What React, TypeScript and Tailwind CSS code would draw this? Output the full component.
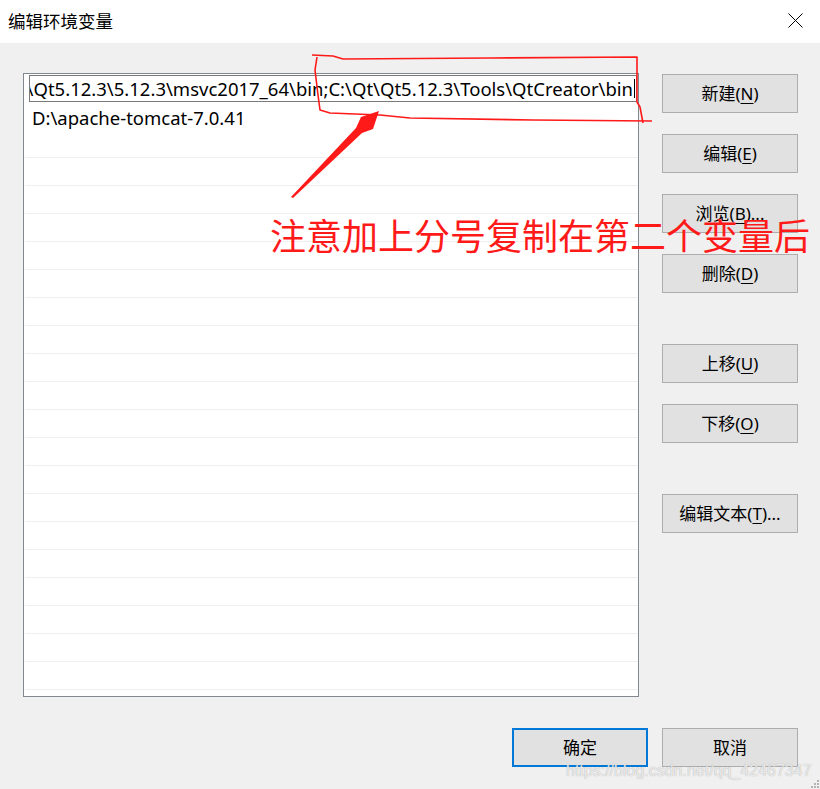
const uiFont = "font-['Noto_Sans','Noto_Sans_CJK_SC',sans-serif]";

type BtnProps = { label: string; hot: string; tail?: string; primary?: boolean; className?: string };

function WinButton({ label, hot, tail = '', primary, className = '' }: BtnProps) {
  return (
    <div
      className={`flex h-[39px] w-[136px] items-center justify-center bg-[#e1e1e1] text-[17px] text-black ${
        primary ? 'border-2 border-[#0078d7]' : 'border border-[#adadad]'
      } ${className}`}
    >
      <span className="whitespace-nowrap">
        {label}
        {hot && (
          <>
            (<span className="underline underline-offset-[3px]">{hot}</span>)
          </>
        )}
        {tail}
      </span>
    </div>
  );
}

export default function App() {
  const rows = Array.from({ length: 22 });

  return (
    <div className={`relative h-[789px] w-[820px] overflow-hidden bg-[#f0f0f0] ${uiFont}`}>
      {/* title bar */}
      <div className="flex h-[43px] items-center justify-between bg-white pl-[8px] pr-[17px]">
        <span className="text-[17.5px] leading-none text-black">编辑环境变量</span>
        <svg width="15" height="15" viewBox="0 0 15 15" className="mb-[2px]">
          <path d="M0.5 0.5 L14.5 14.5 M14.5 0.5 L0.5 14.5" stroke="#000" strokeWidth="1" fill="none" />
        </svg>
      </div>

      {/* list + side buttons */}
      <div className="flex pl-[23px] pt-[30px]">
        <div className="flex h-[624px] w-[616px] flex-col border border-[#828790] bg-white">
          {rows.map((_, i) => (
            <div key={i} className="flex h-[28px] shrink-0 flex-col">
              <div className="flex flex-1 items-center">
                {i === 0 && (
                  <div className="ml-[5px] mr-[1px] mt-[1px] flex h-[27px] flex-1 justify-end overflow-hidden border border-[#7a7a7a] bg-white pr-[1px]">
                    <span className="flex items-center whitespace-nowrap text-[18.5px] text-black">
                      C:\Qt\Qt5.12.3\5.12.3\msvc2017_64\bin;C:\Qt\Qt5.12.3\Tools\QtCreator\bin
                      <span className="ml-[1px] h-[19px] w-[1px] bg-black" />
                    </span>
                  </div>
                )}
                {i === 1 && <span className="pl-[8px] pt-[2px] text-[18.5px] text-black">D:\apache-tomcat-7.0.41</span>}
              </div>
              {i > 0 && <div className="ml-[1px] h-[1px] bg-[#efefef]" />}
            </div>
          ))}
        </div>

        <div className="ml-[23px] flex flex-col pt-[1px]">
          <WinButton label="新建" hot="N" />
          <WinButton label="编辑" hot="E" className="mt-[21px]" />
          <WinButton label="浏览" hot="B" tail="..." className="mt-[21px]" />
          <WinButton label="删除" hot="D" className="mt-[21px]" />
          <WinButton label="上移" hot="U" className="mt-[51px]" />
          <WinButton label="下移" hot="O" className="mt-[21px]" />
          <WinButton label="编辑文本" hot="T" tail="..." className="mt-[51px]" />
        </div>
      </div>

      {/* footer buttons */}
      <div className="flex justify-end gap-[14px] pr-[22px] pt-[31px]">
        <WinButton label="确定" hot="" primary />
        <WinButton label="取消" hot="" />
      </div>

      {/* red hand-drawn annotation */}
      <svg className="pointer-events-none absolute left-0 top-0" width="820" height="789" viewBox="0 0 820 789">
        <polyline
          points="312,55 333,56 343,59 490,58 637,57 637,102 640,107 643,123"
          fill="none"
          stroke="#ff1a1a"
          strokeWidth="1.6"
          strokeLinejoin="round"
        />
        <polyline
          points="317,57 315,70 318,95 320,110 330,113 380,115 410,118 533,120 652,121"
          fill="none"
          stroke="#ff1a1a"
          strokeWidth="1.6"
          strokeLinejoin="round"
        />
        <polygon points="291,197 356,128 361,117 379,111 373,129 362,133 293,198" fill="#ff1a1a" />
      </svg>
      <div className="pointer-events-none absolute left-[270px] top-[219px] whitespace-nowrap text-[36px] leading-none text-[#ff1a1a]">
        注意加上分号复制在第二个变量后
      </div>

      {/* watermark */}
      <div className="pointer-events-none absolute left-[566px] top-[759px] font-['Liberation_Sans',sans-serif] text-[16px] text-white/75 [text-shadow:0_0_1px_#9a9a9a]">
        https://blog.csdn.net/qq_42467347
      </div>

      {/* resize grip */}
      <svg className="absolute bottom-0 right-0" width="12" height="12" viewBox="0 0 12 12">
        <rect x="9" y="3" width="2" height="2" fill="#b4b4b4" />
        <rect x="6" y="6" width="2" height="2" fill="#b4b4b4" />
        <rect x="9" y="6" width="2" height="2" fill="#b4b4b4" />
        <rect x="3" y="9" width="2" height="2" fill="#b4b4b4" />
        <rect x="6" y="9" width="2" height="2" fill="#b4b4b4" />
        <rect x="9" y="9" width="2" height="2" fill="#b4b4b4" />
      </svg>
    </div>
  );
}
